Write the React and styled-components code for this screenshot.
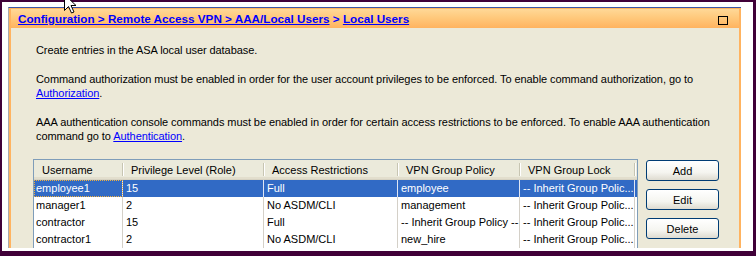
import React from 'react'
import styled, { createGlobalStyle } from 'styled-components'

const GlobalStyle = createGlobalStyle`
    body{
        margin: 0;
        background: #400038;
        font-family: "Liberation Sans", Arial, sans-serif;
    }
`
const Screen = styled.div`
    position: relative;
    width: 756px;
    height: 256px;
    box-sizing: border-box;
    padding: 2px 3px 5px 2px;
    background: #400038;
    overflow: hidden;
`
const Desk = styled.div`
    height: 100%;
    box-sizing: border-box;
    padding: 5px 12px 3px 6px;
    background: #fff;
`
const Panel = styled.div`
    height: 100%;
    box-sizing: border-box;
    display: flex;
    flex-direction: column;
    border-top: 1px solid #3b56a8;
    border-left: 1px solid #a9a8ae;
    background: #ffb360;
    padding: 1px 2px 0 2px;
`
const TitleBar = styled.div`
    height: 19px;
    flex-shrink: 0;
    display: flex;
    align-items: center;
    justify-content: space-between;
    padding: 0 11px 0 7px;
    background: linear-gradient(#ffd897 0%, #ffc97c 45%, #ffb35f 100%);
`
const Crumbs = styled.div`
    font-family: "Liberation Sans", Arial, sans-serif;
    font-weight: bold;
    font-size: 11.7px;
    color: #0000ff;
    white-space: nowrap;
    a{
        color: #0000ff;
        text-decoration: underline;
    }
`
const Restore = styled.span`
    width: 8px;
    height: 7px;
    border: 1px solid #000;
    margin-top: 4px;
`
const Body = styled.div`
    flex: 1;
    min-height: 0;
    overflow: hidden;
    background: #ece9d8;
    padding: 15px 20px 0 22px;
`
const Notes = styled.div`
    margin-left: 3px;
    margin-bottom: 16px;
    font-size: 11px;
    line-height: 14px;
    letter-spacing: -0.07px;
    color: #000;
`
const Para = styled.p`
    margin: 0 0 15px;
    &:last-child{ margin-bottom: 0; }
    a{ color: #0000ff; text-decoration: underline; }
`
const Line = styled.span`
    display: block;
    white-space: nowrap;
`
const Row = styled.div`
    display: flex;
    align-items: flex-start;
    gap: 8px;
`
const Table = styled.div`
    width: 605px;
    height: 100px;
    box-sizing: border-box;
    border: 1px solid #7f9db9;
    border-bottom: none;
    background: #fff;
    font-size: 11px;
`
const Grid = styled.div`
    display: grid;
    grid-template-columns: 89px 141px 134px 122px 115px 1fr;
`
const HeadRow = styled(Grid)`
    height: 20px;
    background: #ebeadb;
    border-bottom: 1px solid #d6d2c2;
    box-shadow: inset 0 -2px 0 #e2decd;
    box-sizing: border-box;
`
const HeadCell = styled.div`
    position: relative;
    padding-left: 8px;
    line-height: 20px;
    white-space: nowrap;
    &::after{
        content: "";
        position: absolute;
        right: 0;
        top: 3px;
        bottom: 4px;
        width: 1px;
        background: #c7c5b2;
        box-shadow: 1px 0 0 #fff;
    }
`
const BodyRow = styled(Grid)`
    height: 17px;
    background: ${props => props.$selected ? '#316ac5' : '#fff'};
    color: ${props => props.$selected ? '#fff' : '#000'};
`
const Cell = styled.div`
    padding-left: 3px;
    line-height: 17px;
    white-space: nowrap;
    overflow: hidden;
    border-right: 1px solid ${props => props.$selected ? '#dfe6f4' : '#d4d0c8'};
    outline: ${props => props.$focus ? '1px dotted #f0b040' : 'none'};
    outline-offset: -1px;
    &:first-child{ padding-left: 2px; }
    &:last-child{ border-right: none; }
`
const Buttons = styled.div`
    display: flex;
    flex-direction: column;
    gap: 8px;
    margin-top: 1px;
`
const Button = styled.button`
    width: 73px;
    height: 21px;
    padding: 0;
    border: 1px solid #003c74;
    border-radius: 3px;
    background: linear-gradient(#ffffff 0%, #f5f5f0 60%, #dedbd0 100%);
    font-family: "Liberation Sans", Arial, sans-serif;
    font-size: 11px;
    color: #000;
`
const Pointer = styled.svg`
    position: absolute;
    left: 64px;
    top: -6px;
`

const columns = ['Username', 'Privilege Level (Role)', 'Access Restrictions', 'VPN Group Policy', 'VPN Group Lock']

const users = [
    ['employee1', '15', 'Full', 'employee', '-- Inherit Group Polic...'],
    ['manager1', '2', 'No ASDM/CLI', 'management', '-- Inherit Group Polic...'],
    ['contractor', '15', 'Full', '-- Inherit Group Policy --', '-- Inherit Group Polic...'],
    ['contractor1', '2', 'No ASDM/CLI', 'new_hire', '-- Inherit Group Polic...'],
]

export default function App() {
    return (
        <>
            <GlobalStyle />
            <Screen>
                <Desk>
                    <Panel>
                        <TitleBar>
                            <Crumbs>
                                <a>Configuration &gt; Remote Access VPN &gt; AAA/Local Users</a> &gt; <a>Local Users</a>
                            </Crumbs>
                            <Restore />
                        </TitleBar>
                        <Body>
                            <Notes>
                                <Para><Line>Create entries in the ASA local user database.</Line></Para>
                                <Para>
                                    <Line>Command authorization must be enabled in order for the user account privileges to be enforced. To enable command authorization, go to</Line>
                                    <Line><a>Authorization</a>.</Line>
                                </Para>
                                <Para>
                                    <Line>AAA authentication console commands must be enabled in order for certain access restrictions to be enforced. To enable AAA authentication</Line>
                                    <Line>command go to <a>Authentication</a>.</Line>
                                </Para>
                            </Notes>
                            <Row>
                                <Table>
                                    <HeadRow>
                                        {columns.map((c, i) => <HeadCell key={i}>{c}</HeadCell>)}
                                        <div />
                                    </HeadRow>
                                    {users.map((u, i) => (
                                        <BodyRow key={i} $selected={i === 0}>
                                            {u.map((v, j) => (
                                                <Cell key={j} $selected={i === 0} $focus={i === 0 && j === 0}>{v}</Cell>
                                            ))}
                                            <Cell $selected={i === 0} />
                                        </BodyRow>
                                    ))}
                                </Table>
                                <Buttons>
                                    <Button>Add</Button>
                                    <Button>Edit</Button>
                                    <Button>Delete</Button>
                                </Buttons>
                            </Row>
                        </Body>
                    </Panel>
                </Desk>
                <Pointer width="13" height="20" viewBox="0 0 13 20">
                    <polygon points="0.5,0.5 0.5,16.5 4.5,12.5 7.5,19 10,18 7,11.5 12,11.5" fill="#fff" stroke="#000" strokeWidth="1" />
                </Pointer>
            </Screen>
        </>
    )
}
